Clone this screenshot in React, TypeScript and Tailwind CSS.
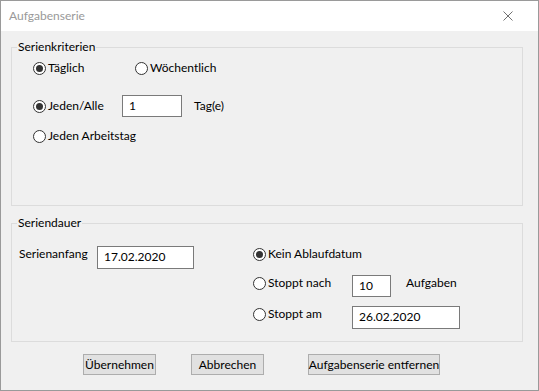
import React from "react";

function Radio({ checked }: { checked?: boolean }) {
  return (
    <span className="w-[13px] h-[13px] rounded-full border border-[#333333] bg-white flex items-center justify-center shrink-0">
      {checked && <span className="w-[7px] h-[7px] rounded-full bg-[#333333]" />}
    </span>
  );
}

function RadioLabel({ checked, label, className = "" }: { checked?: boolean; label: string; className?: string }) {
  return (
    <div className={"flex items-center gap-[2px] h-[16px] whitespace-nowrap " + className}>
      <Radio checked={checked} />
      <span>{label}</span>
    </div>
  );
}

function Field({ value, className = "" }: { value: string; className?: string }) {
  return (
    <div className={"bg-white border border-[#7a7a7a] flex items-center pl-[6px] pb-[1px] whitespace-nowrap " + className}>
      {value}
    </div>
  );
}

function Group({ title, className = "", children }: { title: string; className?: string; children: React.ReactNode }) {
  return (
    <div className={"relative border border-[#dcdcdc] w-[512px] " + className}>
      <span className="absolute top-[-9px] left-[5px] px-[1px] bg-[#f0f0f0] leading-[16px]">{title}</span>
      {children}
    </div>
  );
}

function Button({ label, className = "" }: { label: string; className?: string }) {
  return (
    <div className={"h-[21px] bg-[#e1e1e1] border border-[#adadad] flex items-center justify-center whitespace-nowrap " + className}>
      {label}
    </div>
  );
}

export default function App() {
  return (
    <div
      className="w-[539px] h-[391px] border border-[#9a9a9a] flex flex-col text-[12px] leading-[16px] text-black"
      style={{ fontFamily: 'Lato, "Noto Sans", sans-serif' }}
    >
      <div className="h-[30px] bg-white flex items-center justify-between pl-[8px] pr-[25px] shrink-0">
        <span className="text-[#999999]">Aufgabenserie</span>
        <svg width="10" height="10" viewBox="0 0 10 10" className="mt-[-1px]">
          <path d="M0.5 0.5 L9.5 9.5 M9.5 0.5 L0.5 9.5" stroke="#707070" strokeWidth="1" fill="none" />
        </svg>
      </div>
      <div className="flex-1 bg-[#f0f0f0] flex flex-col px-[10px]">
        <Group title="Serienkriterien" className="mt-[16px] h-[159px]">
          <div className="flex flex-col pl-[21px]">
            <div className="flex items-center h-[16px] mt-[12px]">
              <RadioLabel checked label="Täglich" className="w-[102px]" />
              <RadioLabel label="Wöchentlich" />
            </div>
            <div className="flex items-center h-[22px] mt-[19px]">
              <RadioLabel checked label="Jeden/Alle" className="w-[89px]" />
              <Field value="1" className="w-[60px] h-[22px]" />
              <span className="ml-[12px]">Tag(e)</span>
            </div>
            <RadioLabel label="Jeden Arbeitstag" className="mt-[11px]" />
          </div>
        </Group>
        <Group title="Seriendauer" className="mt-[17px] h-[119px]">
          <div className="flex">
            <div className="w-[241px] flex items-start pl-[7px] mt-[22px]">
              <span className="w-[78px]">Serienanfang</span>
              <Field value="17.02.2020" className="w-[97px] h-[23px]" />
            </div>
            <div className="flex flex-col">
              <RadioLabel checked label="Kein Ablaufdatum" className="mt-[22px]" />
              <div className="flex items-start mt-[13px]">
                <RadioLabel label="Stoppt nach" className="w-[99px]" />
                <Field value="10" className="w-[39px] h-[22px]" />
                <span className="ml-[15px]">Aufgaben</span>
              </div>
              <div className="flex items-start mt-[9px]">
                <RadioLabel label="Stoppt am" className="w-[99px]" />
                <Field value="26.02.2020" className="w-[108px] h-[23px]" />
              </div>
            </div>
          </div>
        </Group>
        <div className="flex mt-[12px] pl-[72px]">
          <Button label="Übernehmen" className="w-[73px]" />
          <Button label="Abbrechen" className="w-[73px] ml-[35px]" />
          <Button label="Aufgabenserie entfernen" className="w-[132px] ml-[44px]" />
        </div>
      </div>
    </div>
  );
}
